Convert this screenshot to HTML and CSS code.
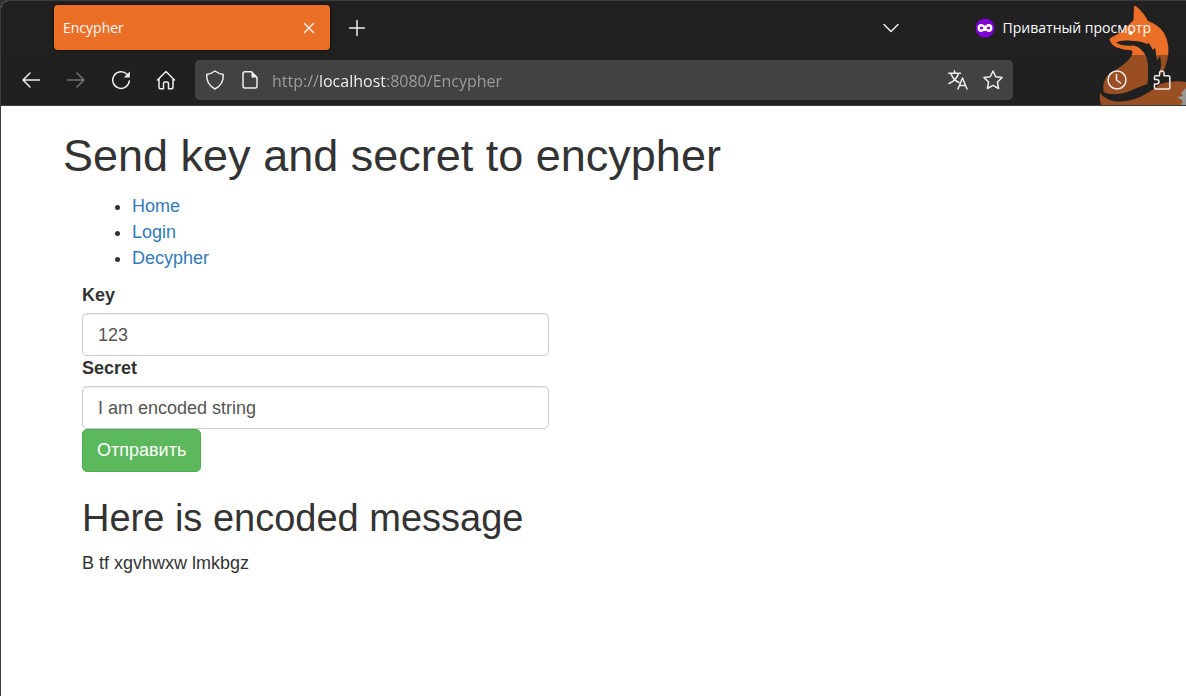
FILE: index.html
```html
<!DOCTYPE html>
<html lang="ru">
<head>
<meta charset="utf-8">
<title>Encypher</title>
<link rel="stylesheet" href="styles.css">
</head>
<body>
<div class="window">
  <header class="chrome">
    <svg class="fox" viewBox="0 0 96 105" width="96" height="105" aria-hidden="true">
      <path fill="#eb6f26" d="M44 6.500Q45 5.500 47 7Q54 13 58 21Q69 25 74 33Q81 46 77 61Q75 69 71 75L70 71Q72 64 70 56L67 61L65 48L62 53Q60 47 56 44Q50 41 38 40.500Q30 40 26 43Q34 45 39 49Q34 50 29 48Q23 47 20 41Q19 39 22 37Q31 33 36 27Q42 22 43.500 20Z"/>
      <path fill="#eb6f26" d="M22 42Q36 42 46 44Q54 48 57 58Q60 71 57.500 84Q48 87 40 91Q24 97 13.500 92Q12 80 19 74Q40 62 42 54Q44 50 39 50Q29 50 22 42Z"/>
      <path fill="#eb6f26" d="M10 93Q15 99 23 101Q36 103 50 97Q62 91 70 84Q82 80 96 82V105H11Q9 99 10 93Z"/>
      <path fill="#212121" d="M26 42.500Q30 40.500 39 41Q52 41 57 44L59 43L63 50L65 48Q67 58 66 70Q64 84 57 89Q60 66 56 56Q52 48 44 45.500Q32 46.500 26 42.500Z"/>
      <path fill="#e8e4e2" d="M96 88L91 93L93 96L87 97L93 101L91 105H96Z"/>
      <circle cx="40.500" cy="33" r="2" fill="#fff"/>
    </svg>
    <div class="tabs">
      <div class="tab">
        <span>Encypher</span>
        <button class="close" aria-label="Закрыть вкладку"><svg width="12" height="12" viewBox="0 0 12 12"><path d="M1.500 1.500l9 9M10.500 1.500l-9 9"/></svg></button>
      </div>
      <button class="tool new" aria-label="Новая вкладка"><svg width="16" height="16" viewBox="0 0 16 16"><path d="M8 .5v15M.5 8h15"/></svg></button>
      <button class="tool all" aria-label="Список вкладок"><svg width="18" height="18" viewBox="0 0 18 18"><path d="M2 5.500l7 7 7-7"/></svg></button>
      <div class="private">
        <svg width="20" height="20" viewBox="0 0 20 20"><circle cx="10" cy="10" r="9.500" fill="#8000d7" stroke="none"/><path d="M10 10C8 6.500 3.800 6.200 3.800 10S8 13.500 10 10c2-3.500 6.200-3.800 6.200 0S12 13.500 10 10Z" stroke="#fff" stroke-width="2.500"/></svg>
        <span>Приватный просмотр</span>
      </div>
    </div>
    <div class="toolbar">
      <button class="tool" aria-label="Назад"><svg width="20" height="20" viewBox="0 0 20 20"><path d="M18.500 10H2M9 3L2 10l7 7"/></svg></button>
      <button class="tool dim" aria-label="Вперёд" disabled><svg width="20" height="20" viewBox="0 0 20 20"><path d="M1.500 10H18M11 3l7 7-7 7"/></svg></button>
      <button class="tool" aria-label="Обновить"><svg width="20" height="20" viewBox="0 0 20 20"><path d="M18.300 11A8.300 8.300 0 1 1 16 4.300"/><path d="M18.800 1.500v6H12.800Z" fill="#eee" stroke="none"/></svg></button>
      <button class="tool" aria-label="Домой"><svg width="20" height="20" viewBox="0 0 20 20"><path d="M1.500 10L10 1.500l8.500 8.500M3 9V17q0 1.800 1.800 1.800H7.500V13.500q0-1.500 1.500-1.500h2q1.500 0 1.500 1.500v5.300h2.700q1.800 0 1.800-1.800V9"/></svg></button>
      <div class="urlbar">
        <svg width="20" height="20" viewBox="0 0 20 20"><path d="M10 1Q13.500 3.600 18.200 4.600Q19 14 10 19Q1 14 1.800 4.600Q6.500 3.600 10 1Z"/></svg>
        <svg class="doc" width="18" height="20" viewBox="0 0 18 20"><path d="M10.500 1.800H4Q2 1.800 2 3.800V16q0 2 2 2h10q2 0 2-2V7.500Z"/><path d="M10.500 1.500V7.500H16.500Z" fill="#eee" stroke="none"/></svg>
        <input class="url" type="text" aria-label="Адрес" value="http://localhost:8080/Encypher">
        <button class="mini" aria-label="Перевести страницу"><svg width="20" height="20" viewBox="0 0 20 20"><path d="M.8 3.300H12.500M6.500.8v2.500M3 3.500Q5 10 11 12.500M10.500 3.500Q8.500 10.500 1 13.500"/><path d="M10 19L14.500 8l4.500 11M11.500 15.500h6"/></svg></button>
        <button class="mini" aria-label="Добавить закладку"><svg width="20" height="20" viewBox="0 0 20 20"><path d="M10 1L12.700 6.800L19 7.600L14.400 12L15.600 18.500L10 15.400L4.400 18.500L5.600 12L1 7.600L7.300 6.800Z"/></svg></button>
      </div>
      <button class="tool" aria-label="История"><svg width="20" height="20" viewBox="0 0 20 20"><circle cx="10" cy="10" r="9"/><path d="M9.500 4.500V10l4 3"/></svg></button>
      <button class="tool" aria-label="Расширения"><svg width="20" height="20" viewBox="0 0 20 20"><path d="M3.800 19Q2.500 19 2.500 17.700V14H4.500Q7 14 7 11.800T4.500 9.500H2.500V7Q2.500 5.700 3.800 5.700H7.500V3.500Q7.500 1 9.800 1T12 3.500V5.700H16.500Q17.800 5.700 17.800 7V17.700Q17.800 19 16.500 19Z"/></svg></button>
    </div>
  </header>
  <main class="page">
    <h1>Send key and secret to encypher</h1>
    <ul class="links">
      <li><a href="#home">Home</a></li>
      <li><a href="#login">Login</a></li>
      <li><a href="#decypher">Decypher</a></li>
    </ul>
    <div class="body">
      <form class="form">
        <label for="key">Key</label>
        <input class="field" id="key" type="text" value="123">
        <label for="secret">Secret</label>
        <input class="field" id="secret" type="text" value="I am encoded string">
        <button class="submit" type="submit">Отправить</button>
      </form>
      <h2>Here is encoded message</h2>
      <p>B tf xgvhwxw lmkbgz</p>
    </div>
  </main>
</div>
</body>
</html>
```
FILE: styles.css
```css
* { box-sizing: border-box; }
body { margin: 0; background: #303030; }
.window {
  min-height: 100vh;
  border-left: 1px solid #3c3c3c;
  border-top: 1px solid #3c3c3c;
  border-top-left-radius: 8px;
  overflow: hidden;
  background: #fff;
}
.chrome {
  position: relative;
  background: #212121;
  color: #fbfbfe;
  font-family: "Open Sans", "Noto Sans", sans-serif;
  font-size: 14px;
  border-bottom: 1px solid #3c3c3c;
}
.chrome svg { display: block; flex: none; fill: none; stroke: #eee; stroke-width: 1.5; stroke-linecap: round; stroke-linejoin: round; }
.chrome .fox { position: absolute; right: 0; top: -1px; stroke: none; }
.chrome button { background: none; border: 0; padding: 0; display: flex; align-items: center; justify-content: center; }
.tabs { position: relative; display: flex; align-items: center; height: 54px; padding: 4px 35px 5px 53px; }
.tab {
  display: flex;
  align-items: center;
  justify-content: space-between;
  width: 276px;
  height: 45px;
  padding: 0 15px 0 9px;
  border-radius: 4px;
  background: #eb6f26;
  box-shadow: 0 0 4px rgba(0, 0, 0, .5);
}
.new { margin-left: 4px; }
.all { margin-left: auto; }
.private { display: flex; align-items: center; gap: 8px; margin-left: 61px; }
.toolbar {
  position: relative;
  display: flex;
  align-items: center;
  height: 50px;
  padding: 0 2px 0 7px;
  background: rgba(33, 33, 33, .4);
}
.tool { width: 45px; height: 40px; flex: none; }
.dim { opacity: .4; }
.urlbar {
  flex: 1;
  min-width: 0;
  display: flex;
  align-items: center;
  height: 40px;
  margin: 0 81px 0 7px;
  padding: 0 10px;
  border-radius: 5px;
  background: #424242;
}
.doc { margin: 0 13px 0 16px; }
.url {
  flex: 1;
  min-width: 0;
  border: 0;
  padding: 2px 0 0;
  font: 16px "Open Sans", "Noto Sans", sans-serif;
  color: transparent;
  background: linear-gradient(90deg, #a0a0a0 47px, #fbfbfe 47px, #fbfbfe 114px, #a0a0a0 114px);
  -webkit-background-clip: text;
  background-clip: text;
}
.mini { margin-left: 15px; }
.page {
  padding: 25px 62px;
  color: #333;
  font: 18px/25px "Liberation Sans", Arial, sans-serif;
}
h1, h2 { margin: 0; font-weight: 400; }
h1 { font-size: 45px; line-height: 50px; }
h2 { font-size: 38px; line-height: 42px; margin: 25px 0 12px; }
p { margin: 0; }
a { color: #337ab7; text-decoration: none; }
.links { margin: 12px 0; padding-left: 69px; line-height: 26px; }
.body { padding-left: 19px; }
.form { max-width: 467px; }
.form label { display: block; font-weight: 700; margin-bottom: 5px; }
.field {
  display: block;
  width: 100%;
  height: 43px;
  padding: 8px 15px 7px;
  border: 1px solid #ccc;
  border-radius: 5px;
  background: #fff;
  box-shadow: inset 0 1px 1px rgba(0, 0, 0, .075);
  color: #555;
  font: inherit;
}
.submit {
  display: block;
  height: 43px;
  padding: 8px 14px;
  border: 1px solid #4cae4c;
  border-radius: 5px;
  background: #5cb85c;
  color: #fff;
  font: inherit;
}
```
